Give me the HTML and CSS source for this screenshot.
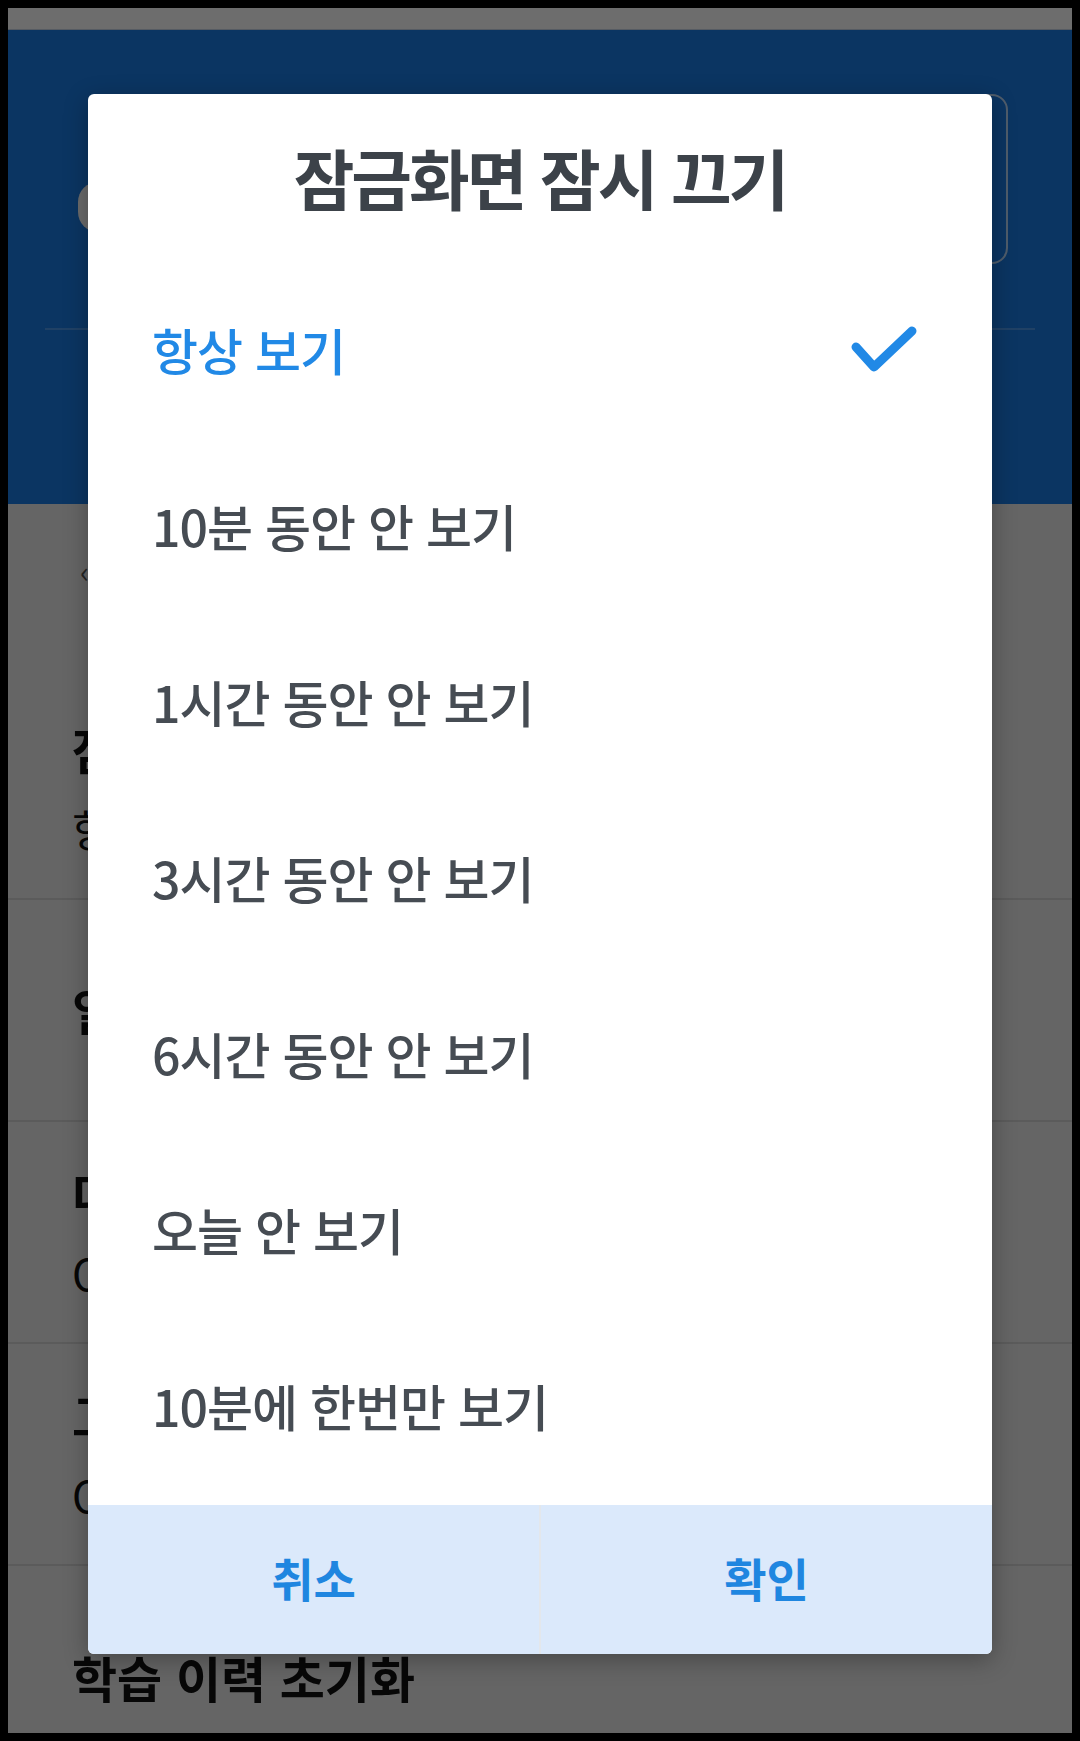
FILE: index.html
```html
<!DOCTYPE html>
<html lang="ko">
<head>
<meta charset="utf-8">
<title>잠금화면 잠시 끄기</title>
<link rel="stylesheet" href="styles.css">
</head>
<body>
<div class="screen">
  <div class="statusbar"></div>
  <header class="header">
    <div class="search-row">
      <div class="pill"></div>
      <div class="search-box"></div>
    </div>
    <div class="header-line"></div>
  </header>
  <main class="page">
    <div class="back">‹</div>
    <ul class="settings">
      <li class="item two">
        <span class="item-title">잠금화면 잠시 끄기</span>
        <span class="item-sub">항상 보기</span>
      </li>
      <li class="item">
        <span class="item-title">일일 학습 알림</span>
      </li>
      <li class="item two">
        <span class="item-title">다크 모드</span>
        <span class="item-sub">OFF</span>
      </li>
      <li class="item two">
        <span class="item-title">고급 설정</span>
        <span class="item-sub">OFF</span>
      </li>
      <li class="item">
        <span class="item-title">학습 이력 초기화</span>
      </li>
    </ul>
  </main>

  <div class="scrim"></div>

  <div class="dialog" role="dialog">
    <h1 class="dialog-title">잠금화면 잠시 끄기</h1>
    <ul class="options">
      <li class="option selected">
        <span>항상 보기</span>
        <svg class="check" width="66" height="46" viewBox="0 0 66 46">
          <polyline points="5,21 23,41 61,5" fill="none" stroke="#2189e6" stroke-width="9" stroke-linecap="round" stroke-linejoin="round"/>
        </svg>
      </li>
      <li class="option"><span>10분 동안 안 보기</span></li>
      <li class="option"><span>1시간 동안 안 보기</span></li>
      <li class="option"><span>3시간 동안 안 보기</span></li>
      <li class="option"><span>6시간 동안 안 보기</span></li>
      <li class="option"><span>오늘 안 보기</span></li>
      <li class="option"><span>10분에 한번만 보기</span></li>
    </ul>
    <div class="actions">
      <button class="action">취소</button>
      <button class="action">확인</button>
    </div>
  </div>
</div>
</body>
</html>
```

FILE: styles.css
```css
* {
  box-sizing: border-box;
}

html, body {
  margin: 0;
  padding: 0;
}

body {
  background: #000;
  padding: 8px;
  font-family: "Noto Sans CJK KR", "Noto Sans", sans-serif;
}

.screen {
  position: relative;
  width: 1064px;
  height: 1725px;
  overflow: hidden;
  background: #ebebeb;
  display: flex;
  flex-direction: column;
}

.statusbar {
  height: 22px;
  background: #fcfcfc;
  border-bottom: 1px solid #c8d4e4;
  flex: none;
}

.header {
  flex: none;
  height: 474px;
  background: #1a7be4;
  padding: 64px 64px 0 70px;
}

.search-row {
  display: flex;
  align-items: flex-start;
  height: 170px;
}

.pill {
  width: 40px;
  height: 50px;
  margin-top: 88px;
  border-radius: 25px;
  background: #f7f7f7;
  flex: none;
}

.search-box {
  flex: 1;
  height: 170px;
  margin-left: -20px;
  border: 2px solid rgba(255, 255, 255, 0.7);
  border-radius: 16px;
}

.header-line {
  height: 2px;
  margin: 64px -27px 0 -33px;
  background: rgba(255, 255, 255, 0.22);
}

.page {
  flex: 1;
  position: relative;
}

.back {
  position: absolute;
  left: 72px;
  top: 44px;
  font-size: 30px;
  color: #555;
}

.settings {
  list-style: none;
  margin: 174px 0 0;
  padding: 0;
}

.item {
  height: 222px;
  border-bottom: 2px solid #d2d2d2;
  padding-left: 64px;
  display: flex;
  flex-direction: column;
  justify-content: center;
  gap: 22px;
}

.item:last-child {
  border-bottom: none;
}

.item-title {
  font-size: 49px;
  font-weight: 700;
  line-height: 58px;
  color: #111;
}

.item-sub {
  font-size: 43px;
  line-height: 56px;
  color: #111;
}

.scrim {
  position: absolute;
  inset: 0;
  background: rgba(0, 0, 0, 0.57);
}

.dialog {
  position: absolute;
  left: 80px;
  top: 86px;
  width: 904px;
  height: 1560px;
  background: #fff;
  border-radius: 6px;
  overflow: hidden;
  display: flex;
  flex-direction: column;
  box-shadow: 0 6px 24px rgba(0, 0, 0, 0.3);
}

.dialog-title {
  margin: 0;
  height: 163px;
  flex: none;
  display: flex;
  align-items: center;
  justify-content: center;
  font-size: 66px;
  font-weight: 700;
  letter-spacing: -3px;
  color: #3c4249;
}

.options {
  list-style: none;
  margin: 0;
  padding: 4px 0 12px;
  flex: 1;
}

.option {
  height: 176px;
  display: flex;
  align-items: center;
  justify-content: space-between;
  padding: 0 75px 0 64px;
  font-size: 50px;
  font-weight: 500;
  letter-spacing: -1px;
  color: #464c53;
}

.option.selected {
  color: #2189e6;
}

.check {
  display: block;
}

.actions {
  flex: none;
  height: 149px;
  display: flex;
  background: #dbe9fb;
}

.action {
  flex: 1;
  border: none;
  background: transparent;
  font-family: inherit;
  font-size: 46px;
  font-weight: 700;
  color: #1f86e0;
  padding: 0 0 6px;
}

.action + .action {
  border-left: 2px solid #e3e7ec;
}
```
